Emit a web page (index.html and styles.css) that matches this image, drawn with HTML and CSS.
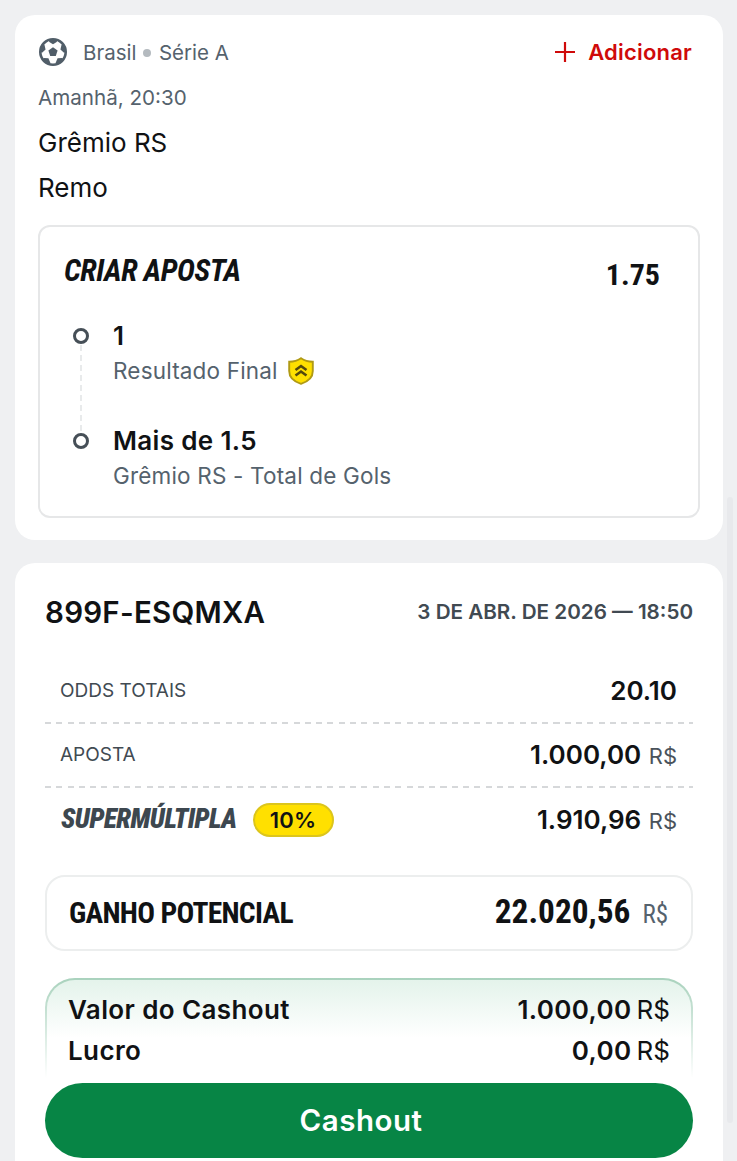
FILE: index.html
```html
<!DOCTYPE html>
<html lang="pt-BR">
<head>
    <meta charset="UTF-8">
    <meta name="viewport" content="width=device-width, initial-scale=1.0">
    <title>Aposta</title>
    <link rel="stylesheet" href="styles.css">
</head>
<body>
    <main class="page">
        <section class="card event">
            <div class="event-top">
                <svg class="ball" viewBox="0 0 28 28">
                    <circle cx="14" cy="14" r="12.700" fill="#fff" stroke="#515e69" stroke-width="2.600"/>
                    <g fill="#515e69">
                        <path d="M14 9.300l4.600 3.300-1.800 5.400h-5.600l-1.800-5.400z"/>
                        <path id="patch" d="M9.300 1.500h9.400l-1 2.500L14 6.200 10.300 4z"/>
                        <use href="#patch" transform="rotate(72 14 14)"/>
                        <use href="#patch" transform="rotate(144 14 14)"/>
                        <use href="#patch" transform="rotate(216 14 14)"/>
                        <use href="#patch" transform="rotate(288 14 14)"/>
                    </g>
                </svg>
                <span class="league">Brasil <i class="dot"></i> Série A</span>
                <a class="add">
                    <svg class="plus" viewBox="0 0 20 20"><path d="M10 0v20M0 10h20" stroke="#cf0a0a" stroke-width="2.200"/></svg>
                    Adicionar
                </a>
            </div>
            <p class="when">Amanhã, 20:30</p>
            <p class="team">Grêmio RS</p>
            <p class="team">Remo</p>

            <div class="builder">
                <div class="builder-head">
                    <h2 class="condensed italic">CRIAR APOSTA</h2>
                    <span class="odd condensed">1.75</span>
                </div>
                <ul class="legs">
                    <li class="leg">
                        <span class="bullet"></span>
                        <div>
                            <p class="pick">1</p>
                            <p class="market">Resultado Final
                                <svg class="shield" viewBox="0 0 26 28">
                                    <path d="M13 1.200c3.400 2.400 7.300 3.500 11.800 3.500v9.300c0 5.800-4.700 10.600-11.800 12.800C5.900 24.600 1.200 19.800 1.200 14V4.700C5.700 4.700 9.600 3.600 13 1.200z" fill="#ffe000" stroke="#b09a14" stroke-width="1.900"/>
                                    <path d="M7.500 13L13 9l5.500 4M7.500 18.500l5.500-4 5.500 4" fill="none" stroke="#54490d" stroke-width="2.600"/>
                                </svg>
                            </p>
                        </div>
                    </li>
                    <li class="leg">
                        <span class="bullet"></span>
                        <div>
                            <p class="pick">Mais de 1.5</p>
                            <p class="market">Grêmio RS - Total de Gols</p>
                        </div>
                    </li>
                </ul>
            </div>
        </section>

        <section class="card summary">
            <header class="summary-head">
                <h1 class="code">899F-ESQMXA</h1>
                <span class="date">3 DE ABR. DE 2026 — 18:50</span>
            </header>
            <div class="row">
                <span class="label">ODDS TOTAIS</span>
                <span class="value">20.10</span>
            </div>
            <div class="row">
                <span class="label">APOSTA</span>
                <span><span class="value">1.000,00</span> <span class="currency">R$</span></span>
            </div>
            <div class="row row-super">
                <span class="super condensed italic">SUPERMÚLTIPLA</span>
                <span class="badge">10%</span>
                <span class="push"><span class="value">1.910,96</span> <span class="currency">R$</span></span>
            </div>
            <div class="potential">
                <span class="potential-label condensed">GANHO POTENCIAL</span>
                <span class="potential-value condensed">22.020,56</span>
                <span class="potential-currency condensed">R$</span>
            </div>
            <div class="cashout">
                <div class="cashout-row"><span>Valor do Cashout</span><span>1.000,00<span class="cur">R$</span></span></div>
                <div class="cashout-row"><span>Lucro</span><span>0,00<span class="cur">R$</span></span></div>
            </div>
            <button class="cashout-button">Cashout</button>
        </section>
    </main>
    <div class="scrollbar"></div>
</body>
</html>
```
FILE: styles.css
```css
* {
    box-sizing: border-box;
}
body {
    margin: 0;
    height: 1161px;
    overflow: hidden;
    background: #eff0f2;
    font-family: Inter, "Liberation Sans", sans-serif;
    color: #101214;
}
p, h1, h2, ul {
    margin: 0;
    padding: 0;
}
.page {
    display: flex;
    flex-direction: column;
    gap: 23px;
    padding: 15px 15px 0;
}
.card {
    width: 708px;
    border-radius: 20px;
    background: #fff;
}
.condensed {
    font-family: Roboto, sans-serif;
    font-weight: 700;
    font-stretch: 75%;
    white-space: nowrap;
}
.italic {
    font-style: italic;
}

/* event card */
.event {
    height: 525px;
    padding: 15px 23px 0;
}
.event-top {
    display: flex;
    align-items: center;
    height: 45px;
    padding-bottom: 2px;
}
.ball {
    width: 28px;
    height: 28px;
    margin-left: 1px;
}
.league {
    margin-left: 16px;
    padding-top: 1px;
    font-size: 20.500px;
    color: #55626d;
}
.dot {
    display: inline-block;
    width: 8px;
    height: 8px;
    margin: 0 2px 0 1px;
    border-radius: 50%;
    background: #b4babf;
    vertical-align: 3px;
}
.add {
    display: flex;
    align-items: center;
    gap: 13px;
    margin-left: auto;
    margin-right: 8px;
    font-size: 22px;
    font-weight: 600;
    letter-spacing: 0.200px;
    color: #cf0a0a;
}
.plus {
    width: 20px;
    height: 20px;
}
.when {
    font-size: 20.600px;
    line-height: 45px;
    color: #55626d;
}
.team {
    font-size: 26px;
    line-height: 45px;
}
.builder {
    height: 293px;
    margin-top: 15px;
    padding: 22px 24px;
    width: 662px;
    border: 2px solid #e6e7e8;
    border-radius: 12px;
}
.builder-head {
    display: flex;
    justify-content: space-between;
    height: 69px;
}
.builder-head h2 {
    font-size: 30.500px;
    line-height: 43px;
    letter-spacing: -0.500px;
}
.odd {
    margin-right: 14px;
    font-size: 30px;
    line-height: 52px;
}
.legs {
    list-style: none;
}
.leg {
    position: relative;
    display: flex;
    height: 105px;
    padding-left: 9px;
}
.leg:first-child::before {
    content: "";
    position: absolute;
    left: 16px;
    top: 27px;
    height: 86px;
    border-left: 2px dashed #e8eaeb;
}
.bullet {
    width: 16px;
    height: 16px;
    margin: 10px 24px 0 0;
    border: 3px solid #464f57;
    border-radius: 50%;
}
.pick {
    font-size: 26px;
    font-weight: 600;
    line-height: 36px;
    letter-spacing: 0.350px;
}
.market {
    display: flex;
    align-items: center;
    gap: 10px;
    font-size: 22.500px;
    line-height: 34px;
    letter-spacing: 0.180px;
    color: #55626d;
}
.shield {
    width: 26px;
    height: 28px;
}

/* coupon summary */
.summary {
    height: 640px;
    padding: 18px 30px 0;
}
.summary-head {
    display: flex;
    justify-content: space-between;
    align-items: center;
    height: 62px;
    margin-bottom: 15px;
}
.code {
    font-size: 29.500px;
    font-weight: 580;
    letter-spacing: 0.250px;
}
.date {
    padding-bottom: 2px;
    font-size: 20.650px;
    font-weight: 600;
    color: #414a52;
}
.row {
    display: flex;
    align-items: center;
    justify-content: space-between;
    height: 64px;
    padding: 0 16px 0 15px;
}
.row + .row {
    background: repeating-linear-gradient(90deg, #d6d8da 0 6px, transparent 6px 11.300px) top / 100% 2px no-repeat;
}
.row-super {
    height: 66px;
}
.label {
    font-size: 19px;
    color: #414a52;
}
.value {
    font-size: 26px;
    font-weight: 600;
}
.currency {
    margin-left: 3px;
    font-size: 22px;
    color: #4a535b;
}
.super {
    padding: 0 0 1px 1px;
    font-size: 27px;
    font-weight: 900;
    letter-spacing: -0.550px;
    color: #3d474f;
}
.badge {
    width: 81px;
    height: 34px;
    margin: 1px 0 0 16px;
    border: 2px solid #dcc51c;
    border-radius: 17px;
    background: #ffe000;
    font-size: 22px;
    font-weight: 560;
    line-height: 30px;
    letter-spacing: 0.300px;
    text-align: center;
}
.push {
    margin-left: auto;
}
.potential {
    display: flex;
    align-items: baseline;
    height: 76px;
    margin-top: 23px;
    padding: 15px 23px 0 22px;
    border: 2px solid #eceeee;
    border-radius: 20px;
}
.potential-label {
    font-size: 29.500px;
    letter-spacing: -0.700px;
}
.potential-value {
    margin-left: auto;
    font-size: 33.300px;
}
.potential-currency {
    margin-left: 12px;
    font-size: 25px;
    font-weight: 400;
    color: #55626d;
}
.cashout {
    height: 105px;
    margin-top: 27px;
    padding: 9px 21px 0;
    border: solid transparent;
    border-width: 2px 2px 0;
    border-radius: 30px 30px 0 0;
    background:
        linear-gradient(#e4f3eb, #fff 58px) padding-box,
        linear-gradient(#a9d2bd, #fff 100px) border-box;
}
.cashout-row {
    display: flex;
    justify-content: space-between;
    font-size: 26px;
    font-weight: 560;
    line-height: 41px;
    letter-spacing: 0.380px;
}
.cur {
    margin-left: 5px;
    font-weight: 400;
    letter-spacing: 0;
}
.cashout-button {
    display: block;
    width: 648px;
    height: 75px;
    padding: 0 16px 2px 0;
    border: 0;
    border-radius: 38px;
    background: #078545;
    color: #fff;
    font-family: inherit;
    font-size: 29.500px;
    font-weight: 570;
    letter-spacing: 0.500px;
}
.scrollbar {
    position: absolute;
    right: 4px;
    top: 497px;
    width: 6px;
    height: 626px;
    border-radius: 3px;
    background: #e8e9ec;
}
```
